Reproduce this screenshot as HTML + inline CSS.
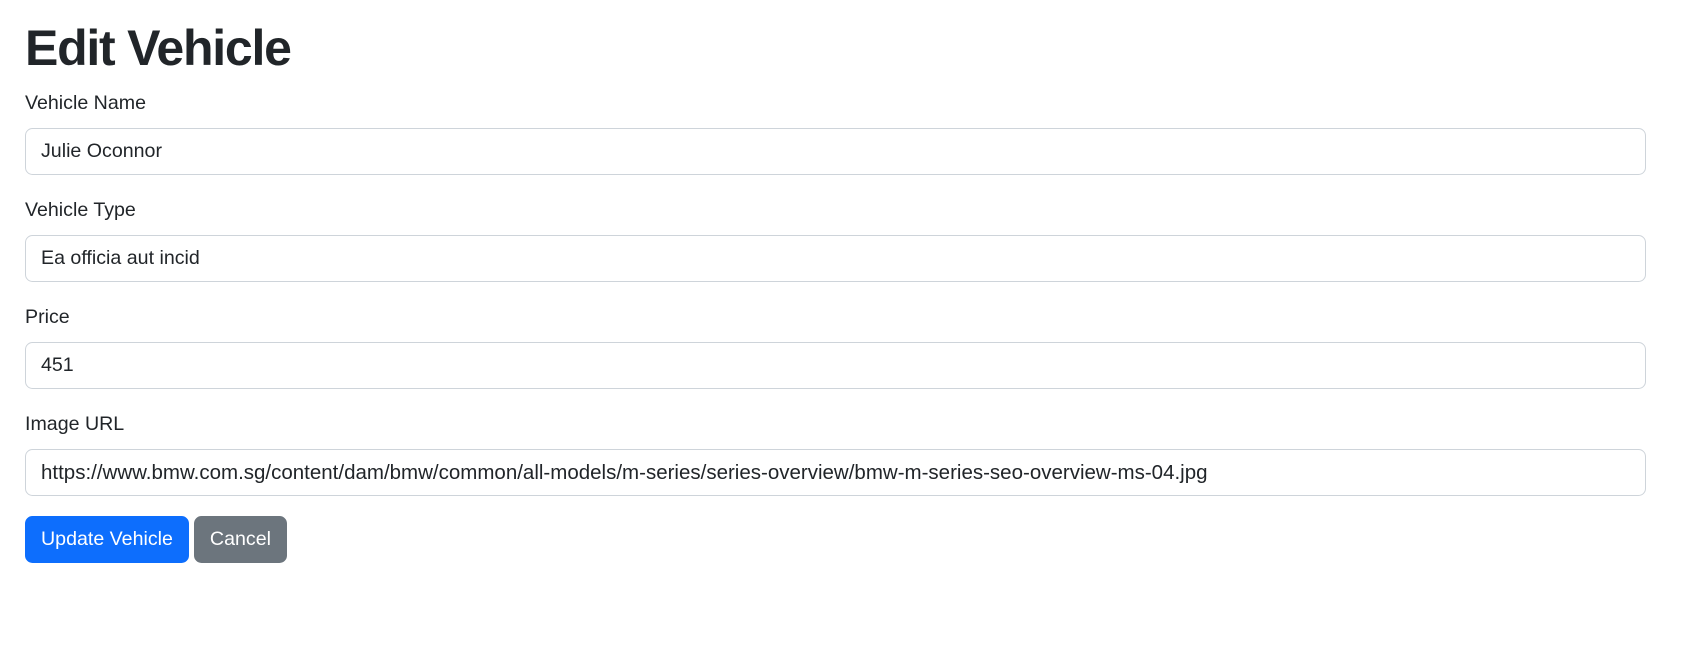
<!DOCTYPE html>
<html><head><style>
html{zoom:1.25}
body{margin:0;font-family:"Liberation Sans",sans-serif;font-size:16px;color:#212529;background:#fff}
.c{position:absolute;left:20px;top:14px;width:1297px}
h1{font-size:40px;font-weight:700;line-height:48px;margin:0 0 8px;letter-spacing:-1px}
label{display:block;line-height:24px;margin-bottom:8px;font-size:15.7px}
.in{height:36px;border:1px solid #ced4da;border-radius:6px;padding:0 12px;line-height:36px;margin-bottom:16px;font-size:15.7px;white-space:nowrap;overflow:hidden}
.in.u{font-size:16.4px}
.btn{display:inline-block;height:36px;line-height:36px;padding:0 12px;border-radius:6px;color:#fff;font-size:15.7px;border:1px solid}
.p{background:#0d6efd;border-color:#0d6efd}
.s{background:#6c757d;border-color:#6c757d;margin-left:4px}
</style></head><body><div class="c">
<h1>Edit Vehicle</h1>
<label>Vehicle Name</label><div class="in">Julie Oconnor</div>
<label>Vehicle Type</label><div class="in">Ea officia aut incid</div>
<label>Price</label><div class="in">451</div>
<label>Image URL</label><div class="in u">https://www.bmw.com.sg/content/dam/bmw/common/all-models/m-series/series-overview/bmw-m-series-seo-overview-ms-04.jpg</div>
<span class="btn p">Update Vehicle</span><span class="btn s">Cancel</span>
</div></body></html>
